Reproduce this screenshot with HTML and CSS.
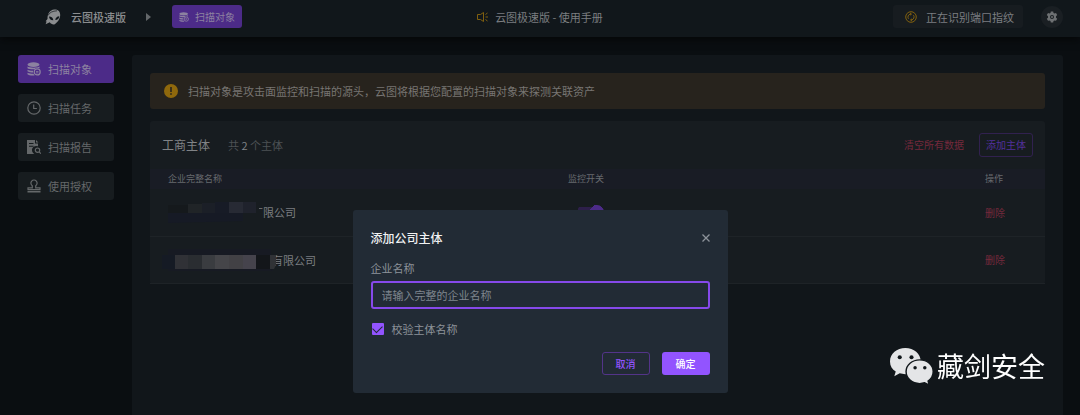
FILE: index.html
```html
<!doctype html>
<html lang="zh-CN">
<head>
<meta charset="utf-8">
<title>云图极速版</title>
<link rel="stylesheet" href="styles.css">
</head>

<body>
<svg class="defs" aria-hidden="true">
	<symbol id="i-data" viewBox="0 0 14 14">
		<ellipse cx="6.5" cy="2.6" rx="6" ry="2.3"/>
		<path d="M.5 4.600c1.600 1.400 10.400 1.400 12 0v1.700a4 4 0 0 0-4.900.9C4.500 7.400 1.500 7 .5 6.200z"/>
		<path d="M.5 7.700c1.500.9 3.900 1.100 5.500 1v1.800C4 10.500 1.500 10.200.5 9.300z"/>
		<path d="M.5 10.800c1.500.9 4 1 5.900 1l1.200 1.700C5 13.800 1.500 13.500.5 12.300z"/>
		<circle cx="10.200" cy="9.900" r="3" fill="none" stroke="currentColor" stroke-width="1.200"/>
		<path d="M9 9h2.400v.8H9zM9 10.500h2.400v.8H9z"/>
	</symbol>
</svg>
<header class="header">
	<div class="h_left">
		<svg class="logo" viewBox="0 0 16 16" aria-hidden="true">
			<path fill="currentColor" fill-rule="evenodd" d="M9.200.6C13 .2 15.400 2.700 15.200 6.200c-.2 3.700-2.800 7.600-5.900 9.200-2 .3-3.500-.8-4.500-2.200L.6 15.200l1-2.700-1-.3 1.900-2.300C2.400 5 4.800 1.100 9.200.6zM4 7.600c.2 2.400 1.700 3.800 4.300 3.700C8.200 9 6.600 7.600 4 7.600zm10.300-.4c-2.400.2-3.900 1.600-4 3.900 2.300-.1 3.900-1.500 4-3.900z"/>
			<path fill="none" stroke="#11171b" stroke-width=".7" d="M3 6.500C4.500 3.500 7.500 2 12 1.800"/>
		</svg>
		<strong class="brand">云图极速版</strong>
		<svg class="arrow" viewBox="0 0 5 8" aria-hidden="true"><path fill="currentColor" d="M0 0l5 4-5 4z"/></svg>
		<a href="#" class="crumb"><svg class="ico_s" aria-hidden="true"><use href="#i-data"/></svg>扫描对象</a>
	</div>
	<a href="#" class="notice">
		<svg class="horn" viewBox="0 0 12 10" aria-hidden="true"><path fill="none" stroke="currentColor" d="M3.500 2.500h-3v5h3M3.500 2.500l3-2v9l-3-2M8.500 5H11M8.500 2.500l2-1.500M8.500 7.500l2 1.500"/></svg>
		云图极速版 - 使用手册
	</a>
	<div class="h_right">
		<div class="status">
			<svg class="ico_m" viewBox="0 0 12 12" aria-hidden="true"><g fill="none" stroke="currentColor"><circle cx="6" cy="6" r="5.300"/><path d="M3.500 7.800a3 3 0 0 1 1.900-4.700M8.500 4.200a3 3 0 0 1-1.900 4.700"/></g><path fill="currentColor" d="M5 1.600l2 1.400-1.700 1.700zM7 10.400L5 9l1.700-1.700z"/></svg>
			正在识别端口指纹
		</div>
		<button type="button" class="gear" aria-label="设置">
			<svg class="ico_m" viewBox="0 0 12 12" aria-hidden="true"><path fill="currentColor" fill-rule="evenodd" d="M4.800.5h2.400l.3 1.500 1 .6 1.500-.5 1.200 2-1.200 1.100v1.500l1.200 1.100-1.200 2-1.500-.4-1 .6-.3 1.500H4.800L4.500 10l-1-.6-1.500.4-1.200-2L2 6.700V5.200L.8 4.100l1.200-2 1.500.5 1-.6zM6 4a2 2 0 1 0 0 4 2 2 0 0 0 0-4z"/><circle cx="6" cy="6" r="1" fill="currentColor"/></svg>
		</button>
	</div>
</header>

<div class="wrap">
	<nav class="side">
		<a href="#" class="active"><svg class="ico" aria-hidden="true"><use href="#i-data"/></svg>扫描对象</a>
		<a href="#"><svg class="ico" viewBox="0 0 14 14" aria-hidden="true"><path fill="none" stroke="currentColor" stroke-width="1.200" d="M7 .8a6.200 6.200 0 1 0 0 12.400A6.200 6.200 0 1 0 7 .8M6.700 3.500v4h3.200"/></svg>扫描任务</a>
		<a href="#"><svg class="ico" viewBox="0 0 14 14" aria-hidden="true"><path fill="currentColor" fill-rule="evenodd" d="M0 0h8v3.500h3v2.800a4 4 0 0 0-3.600 7.700H0zM2 3v1h4.500V3zm0 2.700v1h4.500v-1zM9 0l2.500 2.500H9z"/><path fill="none" stroke="currentColor" stroke-width="1.200" d="M10.500 8a2.200 2.200 0 1 0 0 4.400 2.200 2.200 0 0 0 0-4.400M12.200 11.900l1.700 1.800"/></svg>扫描报告</a>
		<a href="#"><svg class="ico" viewBox="0 0 14 14" aria-hidden="true"><path fill="none" stroke="currentColor" stroke-width="1.200" d="M1 10.200V8.800h4.300V6.700a3.100 3.100 0 1 1 3.400 0v2.100H13v1.400"/><path fill="currentColor" d="M.5 10h13v1H.5zM.5 11.700h13v1.700H.5z"/></svg>使用授权</a>
	</nav>
	<main class="main">
		<div class="alert">
			<svg class="ico" viewBox="0 0 14 14" aria-hidden="true"><circle cx="7" cy="7" r="7" fill="currentColor"/><path fill="#27231d" d="M6.200 3h1.600v5H6.200zM6.200 9.200h1.600v1.600H6.200z"/></svg>
			扫描对象是攻击面监控和扫描的源头，云图将根据您配置的扫描对象来探测关联资产
		</div>
		<section class="card">
			<div class="card_top">
				<h2>工商主体</h2>
				<span class="count">共 <b>2</b> 个主体</span>
				<button type="button" class="clear">清空所有数据</button>
				<button type="button" class="add">添加主体</button>
			</div>
			<table class="list">
				<thead>
					<tr><th class="c_name">企业完整名称</th><th>监控开关</th><th class="c_op">操作</th></tr>
				</thead>
				<tbody>
					<tr>
						<td class="name"><div class="name_box">
							<svg class="mask m1" viewBox="0 0 101 22" aria-hidden="true">
								<path fill="#171c20" d="M90 0h7v10h4v12H90z"/>
								<path fill="#15191c" d="M6 4h20v8H6z"/><path fill="#202427" d="M26 3h14v9H26z"/>
								<path fill="#1b1f27" d="M40 2h13v10H40z"/><path fill="#171b26" d="M53 1h14v11H53z"/>
								<path fill="#272a34" d="M67 1h14v11H67z"/><path fill="#1f222c" d="M81 1h13v11H81z"/>
								<path fill="#161a25" d="M6 12h75v8L6 22z"/>
							</svg><span>有限公司</span>
						</div></td>
						<td class="sw"><input type="checkbox" class="switch" role="switch" aria-label="监控开关" checked></td>
						<td><button type="button" class="del">删除</button></td>
					</tr>
					<tr>
						<td class="name"><div class="name_box">
							<svg class="mask m2" viewBox="0 0 114 22" aria-hidden="true">
								<path fill="#171a23" d="M6 0h105v22H6z"/>
								<path fill="#171c20" d="M109 0h3v11l-3 11z"/>
								<path fill="#151a24" d="M0 6h13v14H0z"/><path fill="#303136" d="M13 6h13v14H13z"/>
								<path fill="#2a2d31" d="M26 6h14v14H26z"/><path fill="#3a3c40" d="M40 6h13v14H40z"/>
								<path fill="#454549" d="M53 6h14v14H53z"/><path fill="#424145" d="M67 6h14v14H67z"/>
								<path fill="#45434c" d="M81 6h13v14H81z"/><path fill="#13161a" d="M94 6h14v14H94z"/>
								<path fill="#303236" d="M108 6h6v10l-2 4h-4z"/>
							</svg><span>有限公司</span>
						</div></td>
						<td class="sw"><input type="checkbox" class="switch" role="switch" aria-label="监控开关" checked></td>
						<td><button type="button" class="del">删除</button></td>
					</tr>
				</tbody>
			</table>
		</section>
	</main>
</div>

<div class="overlay">
	<form class="dialog" role="dialog" aria-labelledby="dlg_title">
		<div class="dlg_top">
			<h3 id="dlg_title">添加公司主体</h3>
			<button type="button" class="close" aria-label="关闭"><svg viewBox="0 0 8 8" aria-hidden="true"><path stroke="currentColor" stroke-width="1.300" d="M.5.500l7 7M7.500.500l-7 7"/></svg></button>
		</div>
		<label class="lbl" for="company">企业名称</label>
		<input type="text" id="company" class="txt" placeholder="请输入完整的企业名称">
		<label class="chk"><input type="checkbox" checked>校验主体名称</label>
		<div class="btns">
			<button type="button" class="cancel">取消</button>
			<button type="submit" class="ok">确定</button>
		</div>
	</form>
</div>

<div class="mark">
	<svg viewBox="0 0 42 36" aria-hidden="true">
		<path fill="#e4e5e7" d="M15 0C6.700 0 0 5.600 0 13c0 4.300 2.200 7.700 5.600 10L4.200 27.500l5.300-2.800c1.800.5 3.500.8 5.500.8 8.300 0 15-5.200 15-12.500S23.300 0 15 0z"/>
		<path fill="#e4e5e7" stroke="#11171b" stroke-width="1.400" d="M29 11.500c-7.400 0-13.300 5-13.300 11.500S21.600 34.700 29 34.700c1.700 0 3.300-.3 4.800-.8l4.600 2.400-1.200-4c3-2.100 5-5.400 5-9.300 0-6.500-5.800-11.500-13.200-11.500z"/>
		<g fill="#11171b"><circle cx="9.500" cy="9" r="2"/><circle cx="21" cy="9" r="2"/><circle cx="24.500" cy="19.300" r="1.700"/><circle cx="34" cy="19.300" r="1.700"/></g>
	</svg>
	<span>藏剑安全</span>
</div>
</body>
</html>
```
FILE: styles.css
```css
*{margin:0; padding:0; box-sizing:border-box;}
body{min-height:100vh; display:flex; flex-direction:column; background:#0a0e11; color:#7b7e80; font:11px/20px "Noto Sans CJK SC",sans-serif;}
a{color:inherit; text-decoration:none;}
button,input{font:inherit; color:inherit;}
button{background:none; border:0; cursor:pointer;}
svg{flex:none; display:block;}
.defs{position:absolute; width:0; height:0;}
.ico{width:14px; height:14px; fill:currentColor;}
.ico_m{width:12px; height:12px;}
.ico_s{width:10px; height:10px; fill:currentColor;}

.header{display:grid; grid-template-columns:1fr auto 1fr; align-items:center; padding:5px 17px 9px; background:#11171b; box-shadow:0 2px 8px #050607; position:relative;}
.h_left{display:flex; align-items:center; padding-left:28px;}
.logo{width:16px; height:16px; color:#8b8d8f;}
.brand{margin-left:10px; color:#8b8d8f; font-weight:500;}
.arrow{width:5px; height:8px; margin:0 21px 0 20px; color:#63676a;}
.crumb{display:flex; align-items:center; gap:6px; height:23px; padding:0 7px; border-radius:3px; background:#4c2b88; font-size:10px; color:#8c82a0;}
.notice{display:flex; align-items:center; gap:6px;}
.horn{width:12px; height:10px; color:#80600f;}
.h_right{display:flex; justify-content:flex-end; align-items:center; gap:18px;}
.status{display:flex; align-items:center; gap:9px; height:23px; padding:0 9px 0 12px; border-radius:3px; background:#171c20;}
.status svg{color:#80600f;}
.gear{width:22px; height:22px; border-radius:50%; background:#1a1f23; display:flex; align-items:center; justify-content:center; color:#6e7173;}

.wrap{flex:1; display:flex; gap:18px; padding:18px 17px 0 18px;}
.side{width:96px; flex:none; display:flex; flex-direction:column; gap:11px;}
.side a{display:flex; align-items:center; gap:7px; height:28px; padding-left:9px; border-radius:3px; background:#171c1f; color:#65686a;}
.side .active{background:#4c2b88; color:#8c82a0;}
.main{flex:1; min-width:0; padding:18px; border-radius:3px 3px 0 0; background:#11161a;}
.alert{display:flex; align-items:center; gap:10px; height:36px; padding:0 14px; border-radius:3px; background:#27231d; color:#777572;}
.alert svg{color:#8f680c;}

.card{margin-top:12px; border-radius:3px; background:#171c20;}
.card_top{display:flex; align-items:center; height:48px; padding:0 12px;}
.card_top h2{font-size:12px; font-weight:400; color:#808386;}
.count{margin:0 auto 0 18px; color:#4d5154;}
.count b{font-weight:400; color:#808386;}
.clear,.add,.del{font-size:10px;}
.clear,.del{color:#74293c;}
.add{height:24px; padding:0 6px; margin-left:15px; border:1px solid #31214f; border-radius:3px; color:#51309a;}
.list{width:100%; table-layout:fixed; border-collapse:collapse;}
.list th{height:20px; padding-left:18px; background:#191c25; font-size:9px; line-height:18px; font-weight:400; text-align:left; color:#676a6e;}
.list .c_name{width:44.7%;}
.list .c_op{width:78px;}
.list td{height:47px; padding-left:18px; border-bottom:1px solid #1e2327;}
.list .name{padding-left:12px;}
.list .sw{padding-left:27px;}
.name_box{display:flex; align-items:center;}
.mask{height:22px; position:relative; z-index:1;}
.m1{width:101px; margin-right:-11px;}
.m2{width:114px; margin-right:-4px;}
.switch{appearance:none; display:block; width:27px; height:14px; border-radius:7px; background:radial-gradient(circle at 20px 7px,#4c2b88 7px,transparent 7px),linear-gradient(#2d1f4a,#2d1f4a) 1px 2px/20px 10px no-repeat;}

.overlay{position:fixed; inset:0; display:flex; justify-content:center; align-items:flex-end; padding-bottom:22px;}
.dialog{width:375px; padding:18px; border-radius:3px; background:#222b35; color:#8d939a;}
.dlg_top{display:flex; justify-content:space-between; align-items:center;}
.dlg_top h3{font-size:12px; font-weight:500; color:#f0f1f2;}
.close{padding:6px 0 6px 6px;}
.close svg{width:8px; height:8px;}
.lbl{display:block; margin:10px 0 3px;}
.txt{display:block; width:100%; height:28px; padding:0 9px; border:2px solid #8649ea; border-radius:3px; background:none; outline:0;}
.txt::placeholder{color:#7f868e;}
.chk{display:flex; align-items:center; gap:8px; margin:10px 0 13px 1px;}
.chk input{appearance:none; width:12px; height:12px; border-radius:1px; background:#9254ff; display:flex; align-items:center; justify-content:center;}
.chk input:checked::before{content:""; width:8px; height:5px; margin-top:-3px; border:solid #222b35; border-width:0 0 1px 1px; transform:rotate(-45deg);}
.btns{display:flex; justify-content:flex-end; gap:12px;}
.btns button{width:48px; height:23px; border-radius:3px; font-size:10px; font-weight:500;}
.cancel{border:1px solid #533489; color:#9254ff;}
.ok{background:#9254ff; color:#fff;}

.mark{position:fixed; right:35px; bottom:29px; display:flex; align-items:center; gap:4px; color:#fff; font-size:27px; line-height:40px;}
.mark svg{width:43px; height:37px;}
```
